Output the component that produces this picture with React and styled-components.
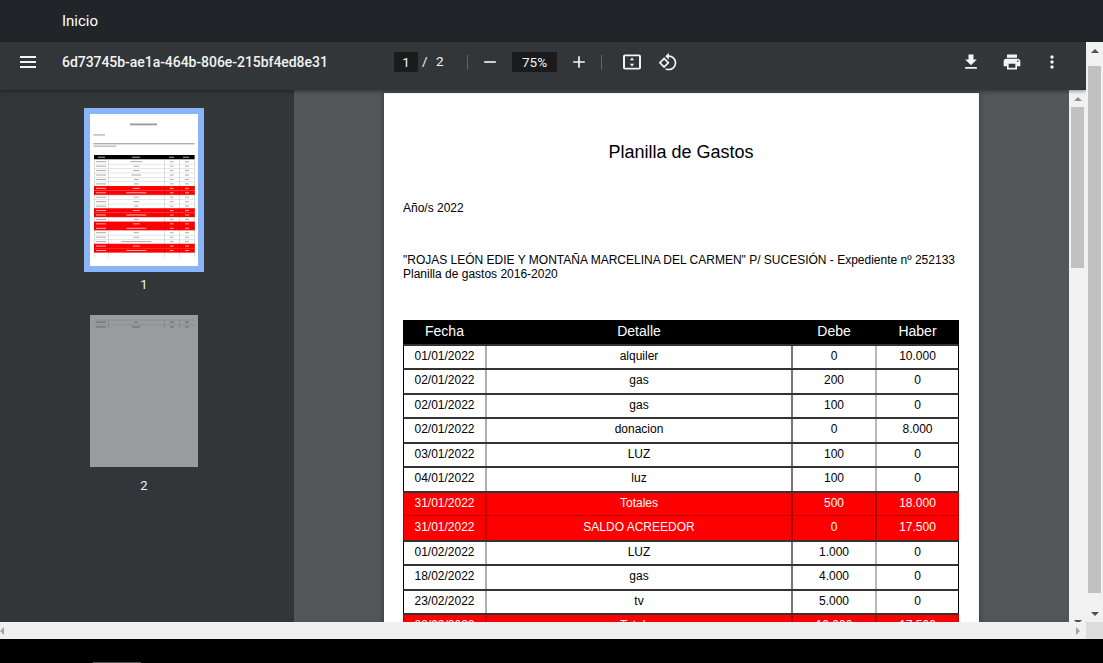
import React from 'react'
import styled, { createGlobalStyle } from 'styled-components'

const GlobalStyle = createGlobalStyle`
  html, body { margin: 0; padding: 0; background: #000; }
  body { font-family: Roboto, "Liberation Sans", sans-serif; overflow: hidden; }
`

const Shell = styled.div`
  width: 1103px;
  height: 663px;
  display: flex;
  flex-direction: column;
  overflow: hidden;
`

const Nav = styled.nav`
  flex: 0 0 42px;
  display: flex;
  align-items: center;
  padding-left: 62px;
  background: #212529;
`

const NavLink = styled.a`
  color: #fff;
  font-size: 15px;
  line-height: 20px;
`

const Body = styled.div`
  flex: 0 0 580px;
  display: flex;
  min-height: 0;
`

const Viewer = styled.div`
  flex: 1;
  display: flex;
  flex-direction: column;
  min-width: 0;
`

const Toolbar = styled.div`
  flex: 0 0 48px;
  box-sizing: border-box;
  display: flex;
  align-items: center;
  padding: 0 0 8px 16px;
  background: #323639;
  color: #f1f3f4;
  position: relative;
  z-index: 2;
  box-shadow: 0 1px 4px rgba(0, 0, 0, 0.45);
`

const IconButton = styled.div`
  flex: 0 0 24px;
  height: 24px;
  margin-left: ${(p) => p.$ml || 0}px;
  display: flex;
  align-items: center;
  justify-content: center;
  svg { display: block; fill: #f1f3f4; }
`

const DocTitle = styled.div`
  flex: 0 0 332px;
  margin-left: 22px;
  font-size: 14px;
  font-weight: 500;
  letter-spacing: -0.05px;
  white-space: nowrap;
`

const NumberBox = styled.div`
  flex: 0 0 ${(p) => p.$w}px;
  height: 20px;
  margin-left: ${(p) => p.$ml || 0}px;
  background: #191b1c;
  font-size: 13.5px;
  line-height: 21px;
  text-align: center;
`

const PageText = styled.span`
  font-size: 13.5px;
  margin-left: ${(p) => p.$ml}px;
  width: ${(p) => p.$w}px;
  margin-top: -2px;
`

const Divider = styled.div`
  flex: 0 0 1px;
  height: 15px;
  margin-left: ${(p) => p.$ml}px;
  background: #5f6265;
`

const Main = styled.div`
  flex: 1;
  display: flex;
  min-height: 0;
  overflow: hidden;
`

const Sidebar = styled.aside`
  flex: 0 0 294px;
  display: flex;
  flex-direction: column;
  align-items: center;
  padding: 18px 6px 0 0;
  background: #323639;
  box-sizing: border-box;
`

const ThumbItem = styled.div`
  display: flex;
  flex-direction: column;
  align-items: center;
  margin-bottom: 13px;
`

const ThumbFrame = styled.div`
  border: 6px solid ${(p) => (p.$active ? '#8ab4f8' : 'transparent')};
  svg { display: block; background: #fff; opacity: ${(p) => (p.$active ? 1 : 0.5)}; }
  g.soft { filter: blur(0.35px); }
`

const ThumbLabel = styled.div`
  height: 24px;
  line-height: 26px;
  font-size: 13px;
  color: #f1f3f4;
`

const Stage = styled.div`
  flex: 1;
  display: flex;
  justify-content: center;
  padding-top: 3px;
  background: #525659;
  overflow: hidden;
  min-width: 0;
`

const Sheet = styled.div`
  flex: 0 0 595px;
  height: 842px;
  box-sizing: border-box;
  padding: 47px 20px 0 19px;
  background: #fff;
  color: #000;
  font-family: "Liberation Sans", Arial, sans-serif;
  font-size: 12px;
  box-shadow: 0 0 5px rgba(0, 0, 0, 0.4);
`

const SheetTitle = styled.h1`
  margin: 0;
  height: 24px;
  font-size: 18px;
  line-height: 24px;
  font-weight: 400;
  text-align: center;
`

const Para = styled.p`
  margin: ${(p) => p.$top}px 0 0;
  line-height: 14px;
`

const Sheetable = styled.div`
  margin-top: 39px;
`

const Row = styled.div`
  display: grid;
  grid-template-columns: 83px 306px 84px 81px;
  height: ${(p) => (p.$head ? 23.5 : 24.5)}px;
  box-sizing: border-box;
  text-align: center;
  line-height: ${(p) => (p.$head ? 23 : p.$soft ? 22 : 20)}px;
  background: ${(p) => (p.$head ? '#000' : p.$red ? '#f00' : '#fff')};
  color: ${(p) => (p.$head || p.$red ? '#fff' : '#000')};
  font-size: ${(p) => (p.$head ? 14 : 12)}px;
  border-left: 1px solid ${(p) => (p.$red ? '#b00000' : '#000')};
  border-right: 1px solid ${(p) => (p.$red ? '#b00000' : '#000')};
  border-top: ${(p) => (p.$head ? 0 : p.$soft ? 1 : 2)}px solid ${(p) => (p.$soft ? '#c40000' : '#333')};
`

const Cell = styled.div`
  border-right: 2px solid ${(p) => (p.$head ? '#000' : p.$sep)};
  &:last-child { border-right: 0; }
`

const VScroll = styled.div`
  flex: 0 0 17px;
  display: flex;
  flex-direction: column;
  align-items: center;
  background: #f1f1f1;
  position: relative;
  z-index: ${(p) => (p.$outer ? 3 : 1)};
  height: ${(p) => p.$h}px;
`

const ArrowBox = styled.div`
  flex: 0 0 17px;
  display: flex;
  align-items: center;
  justify-content: center;
`

const Triangle = styled.span`
  width: 0;
  height: 0;
  border-left: ${(p) => (p.$dir === 'left' ? 0 : p.$dir === 'right' ? '4px solid ' + p.$c : '4px solid transparent')};
  border-right: ${(p) => (p.$dir === 'right' ? 0 : p.$dir === 'left' ? '4px solid ' + p.$c : '4px solid transparent')};
  border-top: ${(p) => (p.$dir === 'up' ? 0 : p.$dir === 'down' ? '4px solid ' + p.$c : '4px solid transparent')};
  border-bottom: ${(p) => (p.$dir === 'down' ? 0 : p.$dir === 'up' ? '4px solid ' + p.$c : '4px solid transparent')};
`

const VThumb = styled.div`
  width: 13px;
  height: ${(p) => p.$h}px;
  margin-top: ${(p) => p.$top}px;
  margin-bottom: auto;
  background: #c1c1c1;
  flex: none;
`

const HScroll = styled.div`
  flex: 0 0 17px;
  display: flex;
  align-items: center;
  background: #f0f0f0;
`

const HTrack = styled.div`
  flex: 1;
  display: flex;
  align-items: center;
  justify-content: space-between;
  padding-right: 6px;
`

const Corner = styled.div`
  flex: 0 0 17px;
  height: 17px;
  background: #dcdcdc;
`

const BlackBar = styled.div`
  flex: 1;
  display: flex;
  align-items: flex-end;
  background: #000;
`

const TaskbarEdge = styled.div`
  width: 48px;
  height: 1px;
  margin-left: 93px;
  background: #555;
`

const Icon = ({ d, size = 20 }) => (
  <svg width={size} height={size} viewBox="0 0 24 24"><path d={d} /></svg>
)

const icons = {
  menu: 'M4 6h16v2H4zM4 11h16v2H4zM4 16h16v2H4z',
  minus: 'M19 13H5v-2h14v2z',
  plus: 'M19 13h-6v6h-2v-6H5v-2h6V5h2v6h6v2z',
  fit: 'M19 4.5H5c-1.1 0-2 .9-2 2v11c0 1.1.9 2 2 2h14c1.1 0 2-.9 2-2v-11c0-1.1-.9-2-2-2zm0 13.2H5V6.3h14v11.4zM12 7.6l2.2 2.7H9.8zM12 16.4l-2.2-2.7h4.4z',
  rotate: 'M7.34 6.41L.86 12.9l6.49 6.48 6.49-6.48-6.5-6.49zM3.69 12.9l3.66-3.66L11 12.9l-3.66 3.66-3.65-3.66zm15.67-6.26C17.61 4.88 15.3 4 13 4V.76L8.76 5 13 9.24V6c1.79 0 3.58.68 4.95 2.05 2.73 2.73 2.73 7.17 0 9.9C16.58 19.32 14.79 20 13 20c-.97 0-1.94-.21-2.84-.61l-1.49 1.49C10.02 21.62 11.51 22 13 22c2.3 0 4.61-.88 6.36-2.64 3.52-3.51 3.52-9.21 0-12.72z',
  download: 'M19 9h-4V3H9v6H5l7 7 7-7zM5 18v2h14v-2H5z',
  print: 'M19 8H5c-1.66 0-3 1.34-3 3v6h4v4h12v-4h4v-6c0-1.66-1.34-3-3-3zm-3 11H8v-5h8v5zm3-7c-.55 0-1-.45-1-1s.45-1 1-1 1 .45 1 1-.45 1-1 1zm-1-9H6v4h12V3z',
  more: 'M12 8c1.1 0 2-.9 2-2s-.9-2-2-2-2 .9-2 2 .9 2 2 2zm0 2c-1.1 0-2 .9-2 2s.9 2 2 2 2-.9 2-2-.9-2-2-2zm0 6c-1.1 0-2 .9-2 2s.9 2 2 2 2-.9 2-2-.9-2-2-2z',
}

const rows = [
  ['01/01/2022', 'alquiler', '0', '10.000'],
  ['02/01/2022', 'gas', '200', '0'],
  ['02/01/2022', 'gas', '100', '0'],
  ['02/01/2022', 'donacion', '0', '8.000'],
  ['03/01/2022', 'LUZ', '100', '0'],
  ['04/01/2022', 'luz', '100', '0'],
  ['31/01/2022', 'Totales', '500', '18.000', 'red'],
  ['31/01/2022', 'SALDO ACREEDOR', '0', '17.500', 'soft'],
  ['01/02/2022', 'LUZ', '1.000', '0'],
  ['18/02/2022', 'gas', '4.000', '0'],
  ['23/02/2022', 'tv', '5.000', '0'],
  ['28/02/2022', 'Totales', '10.000', '17.500', 'red'],
]

// the miniature of page 1: row colours only, W white, R red, B blank
const thumbRows = 'WWWWWWRRWWWRRWRRWWWRRB'.split('')
const detailWidths = [12, 6, 6, 10, 5, 5, 7, 20, 5, 6, 4, 7, 20, 5, 7, 20, 5, 6, 30, 7, 20, 0]

function PageOneThumb() {
  const rowH = 4.44
  return (
    <svg width="108" height="152" viewBox="0 0 108 152">
      <g className="soft">
        <rect x="40" y="9.5" width="27" height="1.8" fill="#999" />
        <rect x="3.4" y="20.3" width="11.6" height="1.2" fill="#aaa" />
        <rect x="3.4" y="29.2" width="101" height="1.1" fill="#999" />
        <rect x="3.4" y="31.6" width="23" height="1.1" fill="#aaa" />
        <rect x="4" y="41" width="100.6" height="4.4" fill="#000" />
        <rect x="8" y="42.7" width="7" height="1" fill="#aaa" />
        <rect x="42" y="42.7" width="8" height="1" fill="#aaa" />
        <rect x="79" y="42.7" width="5" height="1" fill="#aaa" />
        <rect x="93" y="42.7" width="6" height="1" fill="#aaa" />
        {thumbRows.map((kind, i) => {
          const y = 45.4 + i * rowH
          const red = kind === 'R'
          const text = red ? '#ffb0b0' : '#aaa'
          return (
            <g key={i}>
              {red && <rect x="4" y={y} width="100.6" height={rowH} fill="#f00" />}
              {kind === 'W' && <rect x="4" y={y} width="100.6" height="0.5" fill="#ccc" />}
              {[4, 18.3, 74.3, 89.3, 104.2].map((x) => (
                <rect key={x} x={x} y={y} width="0.5" height={rowH} fill={red ? '#d00000' : '#bbb'} />
              ))}
              {kind !== 'B' && (
                <>
                  <rect x="6" y={y + 1.8} width="10" height="1" fill={text} />
                  <rect x={46.3 - detailWidths[i] / 2} y={y + 1.8} width={detailWidths[i]} height="1" fill={text} />
                  <rect x="80" y={y + 1.8} width="3.5" height="1" fill={text} />
                  <rect x="95" y={y + 1.8} width="4" height="1" fill={text} />
                </>
              )}
            </g>
          )
        })}
      </g>
    </svg>
  )
}

function PageTwoThumb() {
  return (
    <svg width="108" height="152" viewBox="0 0 108 152">
      <g className="soft">
        {[4.8, 9.6].map((y, i) => (
          <g key={y}>
            <rect x="4" y={y} width="100.6" height="0.5" fill="#ccc" />
            {[18.3, 74.3, 89.3].map((x) => (
              <rect key={x} x={x} y={y} width="0.5" height="4.4" fill="#bbb" />
            ))}
            <rect x="6" y={y + 1.8} width="10" height="1" fill="#999" />
            <rect x={i ? 42 : 44} y={y + 1.8} width={i ? 8 : 4} height="1" fill="#999" />
            <rect x="80" y={y + 1.8} width="4" height="1" fill="#999" />
            <rect x="95" y={y + 1.8} width="4" height="1" fill="#999" />
          </g>
        ))}
      </g>
    </svg>
  )
}

const seps = ['#b0b0b0', '#777', '#b8b8b8', 'transparent']
const redSeps = ['#c40000', '#a00000', '#a00000', 'transparent']

function App() {
  return (
    <Shell>
      <GlobalStyle />
      <Nav><NavLink>Inicio</NavLink></Nav>
      <Body>
        <Viewer>
          <Toolbar>
            <IconButton><Icon d={icons.menu} size={24} /></IconButton>
            <DocTitle>6d73745b-ae1a-464b-806e-215bf4ed8e31</DocTitle>
            <NumberBox $w={24}>1</NumberBox>
            <PageText $ml={4} $w={14}>/</PageText>
            <PageText $ml={0} $w={31}>2</PageText>
            <Divider $ml={0} />
            <IconButton $ml={10}><Icon d={icons.minus} /></IconButton>
            <NumberBox $w={45} $ml={10}>75%</NumberBox>
            <IconButton $ml={10}><Icon d={icons.plus} /></IconButton>
            <Divider $ml={10} />
            <IconButton $ml={18}><Icon d={icons.fit} size={24} /></IconButton>
            <IconButton $ml={12}><Icon d={icons.rotate} /></IconButton>
            <IconButton $ml={279}><Icon d={icons.download} /></IconButton>
            <IconButton $ml={17}><Icon d={icons.print} /></IconButton>
            <IconButton $ml={16}><Icon d={icons.more} /></IconButton>
          </Toolbar>
          <Main>
            <Sidebar>
              <ThumbItem>
                <ThumbFrame $active><PageOneThumb /></ThumbFrame>
                <ThumbLabel>1</ThumbLabel>
              </ThumbItem>
              <ThumbItem>
                <ThumbFrame><PageTwoThumb /></ThumbFrame>
                <ThumbLabel>2</ThumbLabel>
              </ThumbItem>
            </Sidebar>
            <Stage>
              <Sheet>
                <SheetTitle>Planilla de Gastos</SheetTitle>
                <Para $top={37}>Año/s 2022</Para>
                <Para $top={38}>"ROJAS LEÓN EDIE Y MONTAÑA MARCELINA DEL CARMEN" P/ SUCESIÓN - Expediente nº 252133<br />Planilla de gastos 2016-2020</Para>
                <Sheetable>
                  <Row $head>
                    {['Fecha', 'Detalle', 'Debe', 'Haber'].map((h) => <Cell key={h} $head>{h}</Cell>)}
                  </Row>
                  {rows.map((r, i) => {
                    const red = r[4] === 'red' || r[4] === 'soft'
                    return (
                      <Row key={i} $red={red} $soft={r[4] === 'soft'}>
                        {r.slice(0, 4).map((c, j) => (
                          <Cell key={j} $sep={red ? redSeps[j] : seps[j]}>{c}</Cell>
                        ))}
                      </Row>
                    )
                  })}
                </Sheetable>
              </Sheet>
            </Stage>
            <VScroll $h={540}>
              <ArrowBox><Triangle $dir="up" $c="#8f8f8f" /></ArrowBox>
              <VThumb $h={161} $top={0} />
              <ArrowBox><Triangle $dir="down" $c="#505050" /></ArrowBox>
            </VScroll>
          </Main>
        </Viewer>
        <VScroll $outer>
          <ArrowBox><Triangle $dir="up" $c="#505050" /></ArrowBox>
          <VThumb $h={527} $top={7} />
          <ArrowBox><Triangle $dir="down" $c="#505050" /></ArrowBox>
        </VScroll>
      </Body>
      <HScroll>
        <HTrack>
          <Triangle $dir="left" $c="#a3a3a3" />
          <Triangle $dir="right" $c="#a3a3a3" />
        </HTrack>
        <Corner />
      </HScroll>
      <BlackBar><TaskbarEdge /></BlackBar>
    </Shell>
  )
}

export default App
